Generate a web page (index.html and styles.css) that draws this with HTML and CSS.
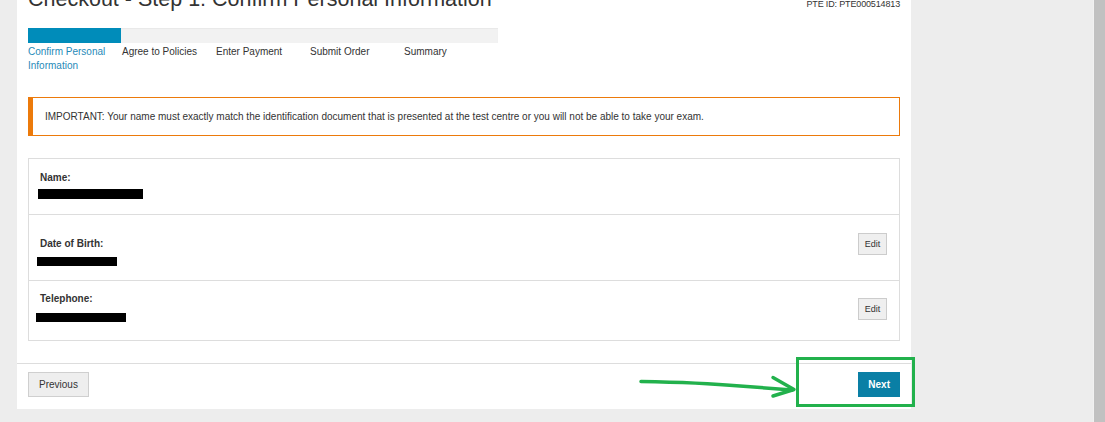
FILE: index.html
```html
<!DOCTYPE html>
<html lang="en">
<head>
<meta charset="utf-8">
<title>Checkout - Step 1</title>
<link rel="stylesheet" href="styles.css">
</head>
<body>
<div class="page">
  <div class="gutter"></div>
  <main class="panel">
    <div class="content">
      <header class="head">
        <h1 class="title">Checkout - Step 1: Confirm Personal Information</h1>
        <div class="pte-id">PTE ID: PTE000514813</div>
      </header>

      <div class="progress"><div class="progress-fill"></div></div>
      <ol class="steps">
        <li class="step step-active">Confirm Personal Information</li>
        <li class="step">Agree to Policies</li>
        <li class="step">Enter Payment</li>
        <li class="step">Submit Order</li>
        <li class="step">Summary</li>
      </ol>

      <div class="notice">IMPORTANT: Your name must exactly match the identification document that is presented at the test centre or you will not be able to take your exam.</div>

      <section class="details">
        <div class="row">
          <div class="field field-name">
            <div class="label">Name:</div>
            <div class="redact redact-name"></div>
          </div>
        </div>
        <div class="row">
          <div class="field field-dob">
            <div class="label">Date of Birth:</div>
            <div class="redact redact-dob"></div>
          </div>
          <button class="btn-edit btn-edit-dob" type="button">Edit</button>
        </div>
        <div class="row">
          <div class="field field-tel">
            <div class="label">Telephone:</div>
            <div class="redact redact-tel"></div>
          </div>
          <button class="btn-edit btn-edit-tel" type="button">Edit</button>
        </div>
      </section>
    </div>

    <footer class="footer">
      <button class="btn-prev" type="button">Previous</button>
      <button class="btn-next" type="button">Next</button>
    </footer>
  </main>
  <div class="side"></div>
  <div class="scrollbar"><div class="scroll-thumb"></div></div>

  <svg class="annotation" width="1105" height="422" viewBox="0 0 1105 422" xmlns="http://www.w3.org/2000/svg">
    <rect x="797.5" y="358.5" width="116" height="47" fill="none" stroke="#22b14c" stroke-width="3"/>
    <path d="M641 381.5 Q 700 382.5 740 386 L 792 390" fill="none" stroke="#22b14c" stroke-width="3.5" stroke-linecap="round" stroke-linejoin="round"/>
    <path d="M773 377.5 L 794 389.5 L 773 396" fill="none" stroke="#22b14c" stroke-width="3.5" stroke-linecap="round" stroke-linejoin="round"/>
  </svg>
</div>
</body>
</html>
```

FILE: styles.css
```css
* { box-sizing: border-box; }

html, body {
  margin: 0;
  padding: 0;
  height: 100%;
  overflow: hidden;
}

body {
  background: #ededed;
  font-family: "Liberation Sans", Arial, sans-serif;
  color: #333;
  font-size: 10px;
}

.page {
  position: relative;
  display: flex;
  align-items: flex-start;
  width: 1105px;
  height: 422px;
}

.gutter { width: 17px; flex: none; }

.panel {
  width: 894px;
  flex: none;
  background: #fff;
  height: 409px;
  display: flex;
  flex-direction: column;
}

.content {
  padding: 0 11px;
  flex: 1;
}

.head {
  display: flex;
  justify-content: space-between;
  align-items: flex-start;
  margin-top: -14px;
}

.title {
  margin: 0;
  font-size: 21.5px;
  line-height: 26px;
  font-weight: normal;
  color: #333;
}

.pte-id {
  margin-top: 12px;
  font-size: 9px;
  line-height: 12px;
  color: #333;
  letter-spacing: -0.15px;
}

.progress {
  margin-top: 16px;
  width: 470px;
  height: 15px;
  background: #f2f2f2;
  box-shadow: inset 0 1px 1px rgba(0,0,0,0.04);
}

.progress-fill {
  width: 93px;
  height: 100%;
  background: #008cba;
}

.steps {
  list-style: none;
  margin: 2px 0 0;
  padding: 0;
  width: 470px;
  display: grid;
  grid-template-columns: repeat(5, 94px);
}

.step {
  font-size: 10px;
  line-height: 14px;
  color: #333;
  padding-right: 6px;
}

.step-active { color: #1f8ab8; }

.notice {
  margin-top: 24px;
  border: 1px solid #ec7a0b;
  border-left-width: 5px;
  padding: 12px 12px 11px;
  font-size: 10px;
  line-height: 14px;
  color: #333;
}

.details {
  margin-top: 22px;
  border: 1px solid #dddddd;
}

.row {
  display: flex;
  align-items: center;
  justify-content: space-between;
  padding-right: 12px;
}

.row + .row { border-top: 1px solid #dddddd; }

.field { padding-left: 11px; }
.field-name { padding-top: 12px; padding-bottom: 15px; }
.field-dob { padding-top: 22px; padding-bottom: 14px; }
.field-tel { padding-top: 11px; padding-bottom: 18px; }

.label {
  font-weight: bold;
  font-size: 10px;
  line-height: 14px;
  color: #333;
}

.redact { background: #000; }
.redact-name { width: 105px; height: 10px; margin: 4px 0 0 -2px; }
.redact-dob { width: 80px; height: 9px; margin: 6px 0 0 -3px; }
.redact-tel { width: 90px; height: 9px; margin: 7px 0 0 -4px; }

.btn-edit {
  height: 22px;
  width: 29px;
  padding: 0;
  background: #efefef;
  border: 1px solid #cccccc;
  font-family: "Liberation Sans", Arial, sans-serif;
  font-size: 9px;
  color: #333;
}

.btn-edit-dob { margin-bottom: 7px; }
.btn-edit-tel { margin-bottom: 3px; }

.footer {
  margin-top: 22px;
  border-top: 1px solid #dddddd;
  padding: 8px 11px 13px;
  display: flex;
  justify-content: space-between;
  align-items: center;
}

.btn-prev {
  height: 25px;
  padding: 0 10px;
  background: #eeeeee;
  border: 1px solid #cfcfcf;
  font-family: "Liberation Sans", Arial, sans-serif;
  font-size: 10px;
  color: #333;
}

.btn-next {
  height: 25px;
  padding: 0 10px;
  background: #0a7fa5;
  border: none;
  font-family: "Liberation Sans", Arial, sans-serif;
  font-weight: bold;
  font-size: 10px;
  color: #fff;
}

.side {
  flex: 1;
  height: 422px;
}

.scrollbar {
  width: 12px;
  height: 422px;
  flex: none;
  background: #f1f1f1;
  padding-left: 1px;
}

.scroll-thumb {
  width: 11px;
  height: 100%;
  background: #c1c1c1;
}

.annotation {
  position: absolute;
  top: 0;
  left: 0;
  pointer-events: none;
}
```
